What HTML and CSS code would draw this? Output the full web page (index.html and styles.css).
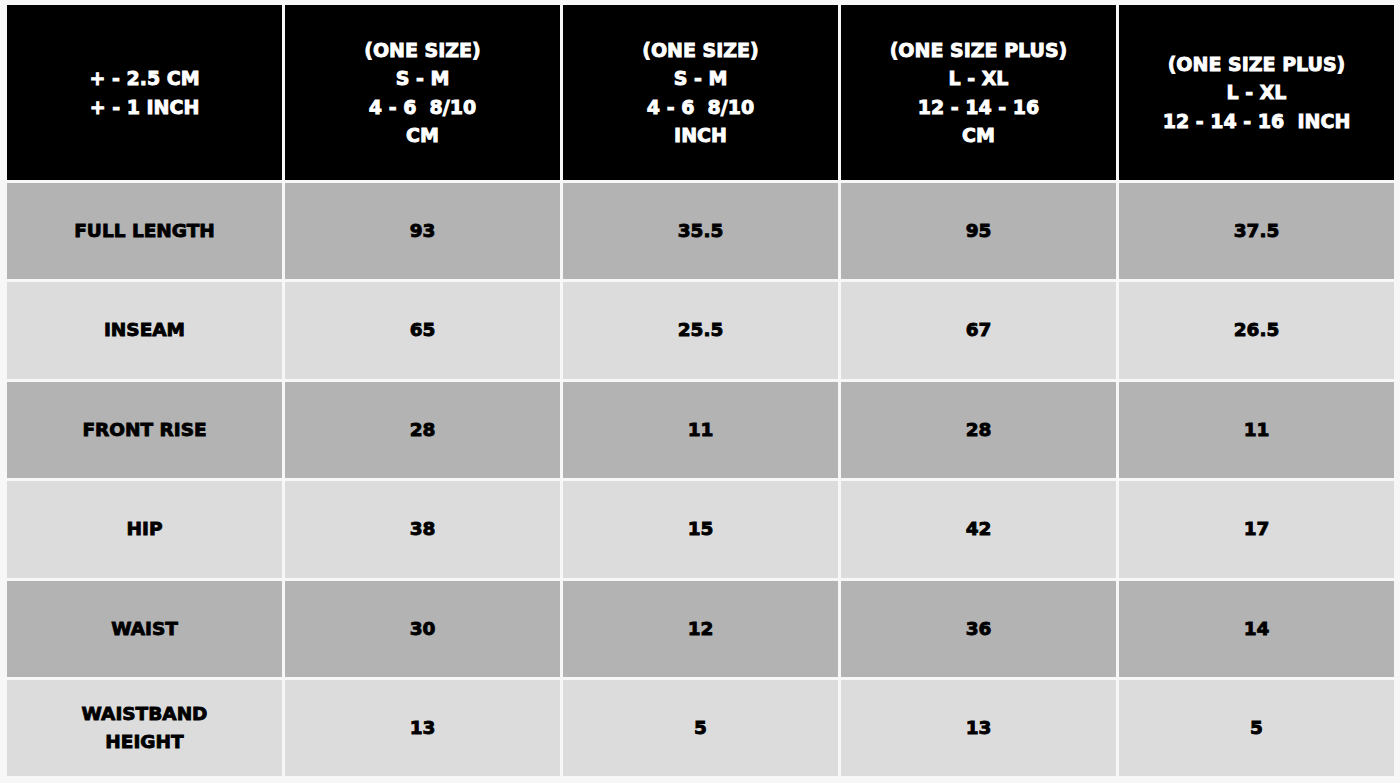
FILE: index.html
```html
<!DOCTYPE html>
<html>
<head>
<meta charset="utf-8">
<link rel="stylesheet" href="styles.css">
</head>
<body>
<div class="chart">
  <div class="cell head">+ - 2.5 CM<br>+ - 1 INCH</div>
  <div class="cell head">(ONE SIZE)<br>S - M<br>4 - 6&nbsp; 8/10<br>CM</div>
  <div class="cell head">(ONE SIZE)<br>S - M<br>4 - 6&nbsp; 8/10<br>INCH</div>
  <div class="cell head">(ONE SIZE PLUS)<br>L - XL<br>12 - 14 - 16<br>CM</div>
  <div class="cell head">(ONE SIZE PLUS)<br>L - XL<br>12 - 14 - 16&nbsp; INCH</div>

  <div class="cell dark">FULL LENGTH</div>
  <div class="cell dark">93</div>
  <div class="cell dark">35.5</div>
  <div class="cell dark">95</div>
  <div class="cell dark">37.5</div>

  <div class="cell light">INSEAM</div>
  <div class="cell light">65</div>
  <div class="cell light">25.5</div>
  <div class="cell light">67</div>
  <div class="cell light">26.5</div>

  <div class="cell dark">FRONT RISE</div>
  <div class="cell dark">28</div>
  <div class="cell dark">11</div>
  <div class="cell dark">28</div>
  <div class="cell dark">11</div>

  <div class="cell light">HIP</div>
  <div class="cell light">38</div>
  <div class="cell light">15</div>
  <div class="cell light">42</div>
  <div class="cell light">17</div>

  <div class="cell dark">WAIST</div>
  <div class="cell dark">30</div>
  <div class="cell dark">12</div>
  <div class="cell dark">36</div>
  <div class="cell dark">14</div>

  <div class="cell light">WAISTBAND<br>HEIGHT</div>
  <div class="cell light">13</div>
  <div class="cell light">5</div>
  <div class="cell light">13</div>
  <div class="cell light">5</div>
</div>
</body>
</html>
```
FILE: styles.css
```css
html, body {
  margin: 0;
  padding: 0;
  background: #f7f7f7;
}
body {
  padding: 5px 4px 0 7px;
  font-family: "DejaVu Sans", "Liberation Sans", sans-serif;
}
.chart {
  display: grid;
  grid-template-columns: repeat(5, 275px);
  grid-template-rows: 175px repeat(6, 96.4px);
  column-gap: 3px;
  row-gap: 3px;
  width: 1387px;
}
.cell {
  display: flex;
  align-items: center;
  justify-content: center;
  text-align: center;
  font-weight: 700;
  font-size: 18.5px;
  line-height: 28.5px;
  color: #000;
  -webkit-text-stroke: 0.9px currentColor;
}
.head {
  background: #000;
  color: #fff;
  font-size: 19px;
}
.dark {
  background: #b3b3b3;
}
.light {
  background: #dcdcdc;
}
```
